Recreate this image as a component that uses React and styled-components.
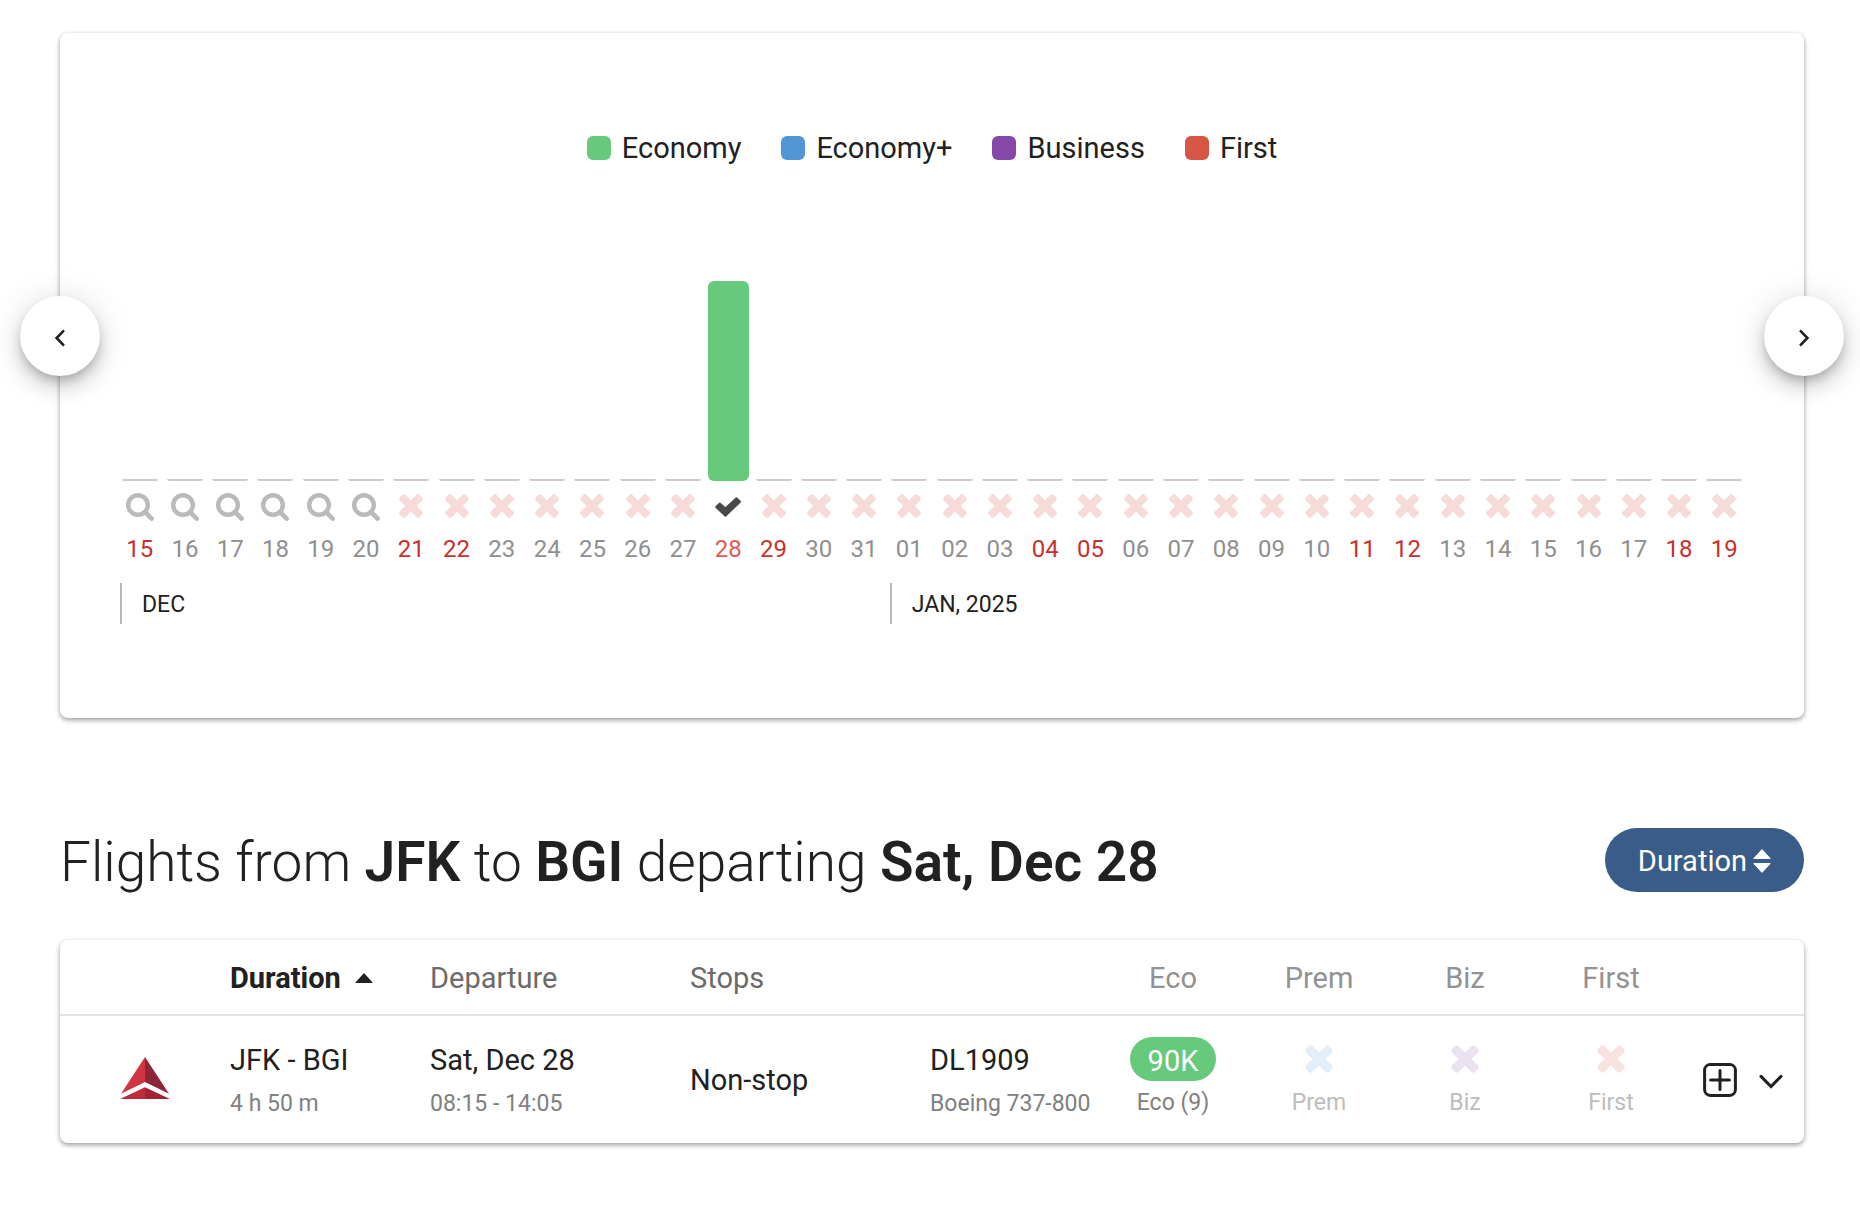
import { useState } from 'react';
import styled, { createGlobalStyle } from 'styled-components';

const GlobalStyle = createGlobalStyle`
  body {
    margin: 0;
    background: #fff;
    color: #212121;
    font-family: Roboto, "Liberation Sans", sans-serif;
    font-size: 29px;
  }
  * {
    box-sizing: border-box;
  }
  button {
    font: inherit;
    color: inherit;
    background: none;
    border: none;
    padding: 0;
    cursor: pointer;
  }
`;

const Page = styled.main`
  padding: 33px 56px 64px 60px;
`;

const Card = styled.section`
  position: relative;
  background: #fff;
  border-radius: 8px;
  box-shadow:
    0 2px 6px rgba(0, 0, 0, 0.14),
    0 2px 4px rgba(0, 0, 0, 0.28);
`;

const ChartCard = styled(Card)`
  padding: 96px 57px 94px;
`;

const NavButton = styled.button`
  position: absolute;
  top: 263px;
  ${({ $side }) => $side}: -40px;
  width: 80px;
  height: 80px;
  display: flex;
  align-items: center;
  justify-content: center;
  padding-top: 4px;
  border-radius: 50%;
  background: #fff;
  box-shadow:
    0 6px 10px -2px rgba(0, 0, 0, 0.2),
    0 12px 20px rgba(0, 0, 0, 0.14),
    0 2px 36px rgba(0, 0, 0, 0.12);
`;

const Legend = styled.ul`
  display: flex;
  justify-content: center;
  gap: 40px;
  margin: 0;
  padding: 0;
  list-style: none;
  line-height: 36px;
`;

const LegendItem = styled.li`
  display: flex;
  align-items: center;
  gap: 11px;
  padding-top: 1px;
`;

const Swatch = styled.span`
  width: 24px;
  height: 24px;
  border-radius: 6px;
  background: ${({ $color }) => $color};
`;

const Days = styled.div`
  display: grid;
  grid-template-columns: repeat(36, 1fr);
  margin-top: 75px;
`;

const Day = styled.button`
  display: flex;
  flex-direction: column;
  align-items: center;
  font-size: 24px;
`;

const Plot = styled.span`
  width: 100%;
  height: 240px;
  display: flex;
  align-items: flex-end;
  justify-content: center;
`;

const Bar = styled.span`
  width: 41px;
  border-radius: 6px;
  background: #66c97b;
`;

const EmptyBar = styled.span`
  width: 36px;
  height: 2px;
  border-radius: 0 0 4px 4px;
  background: #cfcbcb;
`;

const Status = styled.span`
  height: 50px;
  display: flex;
  align-items: center;
`;

const DayNumber = styled.span`
  line-height: 36px;
  color: ${({ $weekend, $selected }) => ($selected ? '#dd5c55' : $weekend ? '#c9302c' : '#8f8f8f')};
`;

const Months = styled.div`
  display: grid;
  grid-template-columns: 17fr 19fr;
  margin-top: 16px;
`;

const Month = styled.div`
  margin-left: 3px;
  padding: 3px 0 0 20px;
  border-left: 2px solid #b8b8b8;
  font-size: 23px;
  line-height: 38px;
`;

const ResultsHead = styled.header`
  display: flex;
  align-items: center;
  justify-content: space-between;
  margin: 110px 0 48px;
`;

const Title = styled.h1`
  margin: 0;
  padding-top: 4px;
  font-size: 55px;
  font-weight: 300;
  line-height: 60px;

  b {
    font-weight: 600;
  }
`;

const SortButton = styled.button`
  height: 64px;
  display: flex;
  align-items: center;
  gap: 6px;
  padding: 2px 33px 0;
  border-radius: 32px;
  background: #3a5c88;
  color: #fff;
`;

const Table = styled.table`
  width: 100%;
  table-layout: fixed;
  border-collapse: separate;
  border-spacing: 0;
`;

const Th = styled.th`
  height: 76px;
  padding: 2px 0 0;
  border-bottom: 2px solid #e2e2e2;
  text-align: ${({ $center }) => ($center ? 'center' : 'left')};
  font-weight: ${({ $active }) => ($active ? 700 : 400)};
  color: ${({ $active, $center }) => ($active ? '#212121' : $center ? '#929292' : '#6b6b6b')};
`;

const HeadButton = styled.button`
  display: flex;
  align-items: center;
  gap: 14px;
`;

const Td = styled.td`
  height: 127px;
  padding: 0;
  text-align: ${({ $center }) => ($center ? 'center' : 'left')};
  vertical-align: middle;
  white-space: nowrap;
`;

const InfoTd = styled(Td)`
  padding-top: 5px;
`;

const LogoTd = styled(Td)`
  padding-top: 4px;
  text-align: center;
`;

const AwardTd = styled(Td)`
  padding-top: 2px;
  text-align: center;
`;

const Main = styled.div`
  height: 44px;
  line-height: 44px;
`;

const Sub = styled.div`
  font-size: 23px;
  line-height: 44px;
  color: ${({ $faded }) => ($faded ? '#bcbcbc' : '#808080')};
`;

const AwardMain = styled(Main)`
  display: flex;
  align-items: center;
  justify-content: center;
`;

const Price = styled.button`
  height: 44px;
  padding: 2px 18px 0;
  border-radius: 22px;
  background: #66c97b;
  color: #fff;
`;

const Actions = styled.div`
  display: flex;
  align-items: center;
  gap: 22px;
  padding-left: 19px;

  button {
    display: flex;
  }
`;

const cabins = [
  { name: 'Economy', color: '#66c97b' },
  { name: 'Economy+', color: '#5296d5' },
  { name: 'Business', color: '#8547a8' },
  { name: 'First', color: '#d65745' },
];

const awards = [
  { name: 'Eco', price: '90K', seats: 9 },
  { name: 'Prem', color: '#e2eef8' },
  { name: 'Biz', color: '#eae1f1' },
  { name: 'First', color: '#f9e3e1' },
];

const columnWidths = [170, 200, 260, 240, 170, 146, 146, 146, 146, 120];

// 15 Dec 2024 is a Sunday
const days = [...Array(36)].map((_, i) => ({
  id: i,
  label: String(i < 17 ? i + 15 : i - 16).padStart(2, '0'),
  weekend: i % 7 === 0 || i % 7 === 6,
  status: i < 6 ? 'search' : i === 13 ? 'open' : 'none',
}));

const SearchIcon = () => (
  <svg width="28" height="30" viewBox="0 -2 28 30" fill="none" stroke="#bababa" strokeWidth="4.4" strokeLinecap="round">
    <circle cx="12" cy="12" r="9.8" />
    <path d="M19 19L25.6 25.6" strokeWidth="4.6" />
  </svg>
);

const CrossIcon = ({ size = 24, color = '#f6dbd9' }) => (
  <svg width={size} height={size} viewBox="0 0 24 24" fill={color}>
    <rect x="-2" y="8" width="28" height="8" rx="2.4" transform="rotate(45 12 12)" />
    <rect x="-2" y="8" width="28" height="8" rx="2.4" transform="rotate(-45 12 12)" />
  </svg>
);

const CheckIcon = () => (
  <svg width="26" height="22" viewBox="0 -2 26 22" fill="#4a4a4a" stroke="#4a4a4a" strokeWidth="2" strokeLinejoin="round">
    <path d="M1.2 10L4.8 6.6L10.4 11.6L21.4 1.2L25 4.8L10.4 18.8Z" />
  </svg>
);

const Chevron = ({ left }) => (
  <svg width="12" height="18" viewBox="0 0 12 18" fill="none" stroke="#212121" strokeWidth="2.6">
    <path d={left ? 'M10 1.4L2.6 9L10 16.6' : 'M2 1.4L9.4 9L2 16.6'} />
  </svg>
);

const SortIcon = () => (
  <svg width="18" height="24" viewBox="0 0 18 24" fill="#fff" stroke="#fff" strokeWidth="1" strokeLinejoin="round">
    <path d="M9 0.6L17.2 9.4H0.8Z" />
    <path d="M9 23.4L17.2 14.6H0.8Z" />
  </svg>
);

const UpIcon = () => (
  <svg width="18" height="10" viewBox="0 0 18 10" fill="#212121">
    <path d="M9 0L17.6 9.4Q17.4 10 16.8 10H1.2Q0.6 10 0.4 9.4Z" />
  </svg>
);

const DeltaLogo = () => (
  <svg width="50" height="42" viewBox="0 0 49 41" role="img" aria-label="Delta">
    <path fill="#cf3440" d="M24.5 0V24.5L1 36Z" />
    <path fill="#8d2437" d="M24.5 0V24.5L48 36Z" />
    <path fill="#c02b3a" d="M24.5 29.5V41H0Z" />
    <path fill="#a32236" d="M24.5 29.5V41H49Z" />
  </svg>
);

const PlusBox = () => (
  <svg width="34" height="34" viewBox="0 0 34 34" fill="none" stroke="#212121" strokeWidth="3" strokeLinecap="round">
    <rect x="1.6" y="1.6" width="30.8" height="30.8" rx="5.6" />
    <path d="M17 7.6V26.4M7.6 17H26.4" />
  </svg>
);

const DownIcon = () => (
  <svg width="24" height="19" viewBox="0 -4 24 19" fill="none" stroke="#212121" strokeWidth="3" strokeLinecap="round">
    <path d="M2 2.4L12 12.6L22 2.4" />
  </svg>
);

const statusIcons = { search: <SearchIcon />, none: <CrossIcon />, open: <CheckIcon /> };

function App() {
  const [selected, setSelected] = useState(13);

  return <>
    <GlobalStyle />
    <Page>
      <ChartCard>
        <NavButton $side="left" aria-label="Earlier dates"><Chevron left /></NavButton>
        <NavButton $side="right" aria-label="Later dates"><Chevron /></NavButton>
        <Legend>
          {cabins.map(({ name, color }) => (
            <LegendItem key={name}><Swatch $color={color} />{name}</LegendItem>
          ))}
        </Legend>
        <Days>
          {days.map(({ id, label, weekend, status }) => (
            <Day key={id} onClick={() => setSelected(id)}>
              <Plot>
                {status === 'open' ? <Bar style={{ height: 200 }} /> : <EmptyBar />}
              </Plot>
              <Status>{statusIcons[status]}</Status>
              <DayNumber $weekend={weekend} $selected={selected === id}>{label}</DayNumber>
            </Day>
          ))}
        </Days>
        <Months>
          <Month>DEC</Month>
          <Month>JAN, 2025</Month>
        </Months>
      </ChartCard>

      <ResultsHead>
        <Title>Flights from <b>JFK</b> to <b>BGI</b> departing <b>Sat, Dec 28</b></Title>
        <SortButton>Duration<SortIcon /></SortButton>
      </ResultsHead>

      <Card>
        <Table>
          <colgroup>
            {columnWidths.map((width, i) => <col key={i} width={width} />)}
          </colgroup>
          <thead>
            <tr>
              <Th />
              <Th $active><HeadButton>Duration <UpIcon /></HeadButton></Th>
              <Th><HeadButton>Departure</HeadButton></Th>
              <Th><HeadButton>Stops</HeadButton></Th>
              <Th />
              {awards.map(({ name }) => <Th key={name} $center>{name}</Th>)}
              <Th />
            </tr>
          </thead>
          <tbody>
            <tr>
              <LogoTd><DeltaLogo /></LogoTd>
              <InfoTd>
                <Main>JFK - BGI</Main>
                <Sub>4 h 50 m</Sub>
              </InfoTd>
              <InfoTd>
                <Main>Sat, Dec 28</Main>
                <Sub>08:15 - 14:05</Sub>
              </InfoTd>
              <Td>Non-stop</Td>
              <InfoTd>
                <Main>DL1909</Main>
                <Sub>Boeing 737-800</Sub>
              </InfoTd>
              {awards.map(({ name, price, seats, color }) => (
                <AwardTd key={name}>
                  <AwardMain>
                    {price ? <Price>{price}</Price> : <CrossIcon size={28} color={color} />}
                  </AwardMain>
                  <Sub $faded={!price}>{price ? `${name} (${seats})` : name}</Sub>
                </AwardTd>
              ))}
              <Td>
                <Actions>
                  <button aria-label="Add flight"><PlusBox /></button>
                  <button aria-label="Show details"><DownIcon /></button>
                </Actions>
              </Td>
            </tr>
          </tbody>
        </Table>
      </Card>
    </Page>
  </>
}

export default App;
